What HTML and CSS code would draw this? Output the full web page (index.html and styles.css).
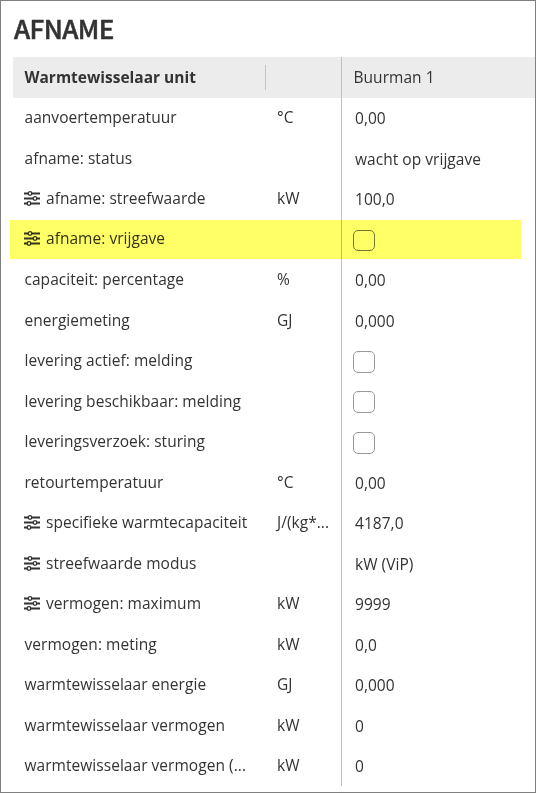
FILE: index.html
```
<!DOCTYPE html>
<html lang="nl">
<head>
    <meta charset="UTF-8">
    <meta name="viewport" content="width=device-width, initial-scale=1.0">
    <title>Afname</title>
    <link rel="stylesheet" href="styles.css">
</head>
<body>
    <svg class="sprite" width="0" height="0">
        <symbol id="sliders" viewBox="0 0 16 15">
            <path d="M0 2.5h4M8 2.5h8M0 7.5h9M13 7.5h3M0 12.5h3M7 12.5h9" stroke="#333" stroke-width="2" fill="none"/>
            <g stroke="#333" stroke-width="1.3" fill="none">
                <circle cx="6" cy="2.5" r="1.8"/>
                <circle cx="11" cy="7.5" r="1.8"/>
                <circle cx="5" cy="12.5" r="1.8"/>
            </g>
        </symbol>
    </svg>
    <div class="page">
        <h1>AFNAME</h1>
        <div class="table">
            <div class="row header">
                <div class="name"><span>Warmtewisselaar unit</span></div>
                <div class="unit"></div>
                <div class="value">Buurman 1</div>
            </div>
            <div class="row">
                <div class="name"><span>aanvoertemperatuur</span></div>
                <div class="unit">°C</div>
                <div class="value">0,00</div>
            </div>
            <div class="row">
                <div class="name"><span>afname: status</span></div>
                <div class="unit"></div>
                <div class="value">wacht op vrijgave</div>
            </div>
            <div class="row">
                <div class="name"><svg class="icon"><use href="#sliders"/></svg><span>afname: streefwaarde</span></div>
                <div class="unit">kW</div>
                <div class="value">100,0</div>
            </div>
            <div class="row marked">
                <div class="name"><svg class="icon"><use href="#sliders"/></svg><span>afname: vrijgave</span></div>
                <div class="unit"></div>
                <div class="value"><i class="check"></i></div>
            </div>
            <div class="row">
                <div class="name"><span>capaciteit: percentage</span></div>
                <div class="unit">%</div>
                <div class="value">0,00</div>
            </div>
            <div class="row">
                <div class="name"><span>energiemeting</span></div>
                <div class="unit">GJ</div>
                <div class="value">0,000</div>
            </div>
            <div class="row">
                <div class="name"><span>levering actief: melding</span></div>
                <div class="unit"></div>
                <div class="value"><i class="check"></i></div>
            </div>
            <div class="row">
                <div class="name"><span>levering beschikbaar: melding</span></div>
                <div class="unit"></div>
                <div class="value"><i class="check"></i></div>
            </div>
            <div class="row">
                <div class="name"><span>leveringsverzoek: sturing</span></div>
                <div class="unit"></div>
                <div class="value"><i class="check"></i></div>
            </div>
            <div class="row">
                <div class="name"><span>retourtemperatuur</span></div>
                <div class="unit">°C</div>
                <div class="value">0,00</div>
            </div>
            <div class="row">
                <div class="name"><svg class="icon"><use href="#sliders"/></svg><span>specifieke warmtecapaciteit</span></div>
                <div class="unit">J/(kg*...</div>
                <div class="value">4187,0</div>
            </div>
            <div class="row">
                <div class="name"><svg class="icon"><use href="#sliders"/></svg><span>streefwaarde modus</span></div>
                <div class="unit"></div>
                <div class="value">kW (ViP)</div>
            </div>
            <div class="row">
                <div class="name"><svg class="icon"><use href="#sliders"/></svg><span>vermogen: maximum</span></div>
                <div class="unit">kW</div>
                <div class="value">9999</div>
            </div>
            <div class="row">
                <div class="name"><span>vermogen: meting</span></div>
                <div class="unit">kW</div>
                <div class="value">0,0</div>
            </div>
            <div class="row">
                <div class="name"><span>warmtewisselaar energie</span></div>
                <div class="unit">GJ</div>
                <div class="value">0,000</div>
            </div>
            <div class="row">
                <div class="name"><span>warmtewisselaar vermogen</span></div>
                <div class="unit">kW</div>
                <div class="value">0</div>
            </div>
            <div class="row">
                <div class="name"><span>warmtewisselaar vermogen (...</span></div>
                <div class="unit">kW</div>
                <div class="value">0</div>
            </div>
        </div>
    </div>
</body>
</html>
```
FILE: styles.css
```
* {
    box-sizing: border-box;
}
body {
    margin: 0;
    background-color: #fff;
    color: #333;
    font-family: "Open Sans", sans-serif;
    font-size: 15.5px;
    letter-spacing: 0.04px;
}
.sprite {
    position: absolute;
}
.page {
    width: 536px;
    height: 793px;
    border: 1px solid #808080;
    padding-left: 12px;
    overflow: hidden;
}
h1 {
    height: 56px;
    margin: 0;
    padding-left: 1px;
    font-family: "Noto Sans CJK SC", sans-serif;
    font-size: 26px;
    font-weight: 500;
    letter-spacing: -0.6px;
    line-height: 54px;
    -webkit-text-stroke: 0.5px #333;
}
.row {
    position: relative;
    display: grid;
    grid-template-columns: 252px 76px 1fr;
    height: 40.5px;
    line-height: 38px;
    white-space: nowrap;
}
.row:last-child {
    height: 40px;
}
.header {
    height: 41px;
    background-color: #ececec;
    line-height: 41px;
}
.header .name {
    font-weight: bold;
}
.name {
    display: flex;
    height: 38.5px;
    align-items: center;
    padding-left: 11.5px;
}
.header .name {
    height: 41px;
    letter-spacing: 0;
}
.unit {
    padding-left: 12px;
}
/* short divider in the header */
.header .unit {
    height: 25px;
    margin-top: 8px;
    border-left: 1px solid #c4c4c4;
}
.value {
    display: flex;
    align-items: center;
    border-left: 1px solid #c0c0c0;
    padding-left: 13px;
}
.header .value {
    padding-left: 11.5px;
}
.icon {
    width: 16px;
    height: 15px;
    margin-top: 1px;
    margin-left: -0.5px;
    margin-right: 6px;
}
.check {
    width: 22px;
    height: 22px;
    margin-top: 1px;
    margin-left: -2px;
    border: 1px solid #999;
    border-radius: 5px;
}
.marked .name {
    height: 37.5px;
}
.marked .check {
    height: 21px;
    border-color: #777;
}
.marked::after {
    content: "";
    position: absolute;
    left: -3px;
    top: 0.5px;
    width: 511px;
    height: 39px;
    background-color: #ffff66;
    mix-blend-mode: multiply;
}
```
